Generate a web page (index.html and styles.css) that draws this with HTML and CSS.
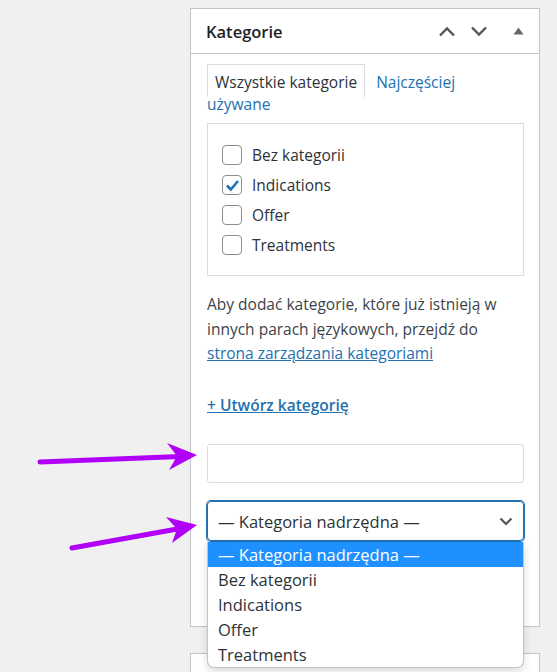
FILE: index.html
```html
<!DOCTYPE html>
<html lang="pl">
<head>
    <meta charset="UTF-8">
    <title>Kategorie</title>
    <link rel="stylesheet" href="styles.css">
</head>
<body>
<div class="screen">
    <div class="postbox">
        <div class="postbox-header">
            <h2 class="postbox-title">Kategorie</h2>
            <div class="handle-actions">
                <svg class="chev" width="18" height="11" viewBox="0 0 18 11"><path d="M2 9.5 L9 2.5 L16 9.5" fill="none" stroke="#50575e" stroke-width="2.4"/></svg>
                <svg class="chev" width="18" height="11" viewBox="0 0 18 11"><path d="M2 1.5 L9 8.5 L16 1.5" fill="none" stroke="#50575e" stroke-width="2.4"/></svg>
                <svg class="tri" width="11" height="8" viewBox="0 0 11 8"><path d="M5.5 0.5 L10.5 7.5 L0.5 7.5 Z" fill="#646970"/></svg>
            </div>
        </div>
        <div class="inside">
            <p class="tabs"><span class="tab-active">Wszystkie kategorie</span> <a class="tab-link" href="#">Najczęściej używane</a></p>

            <ul class="checklist">
                <li><span class="cb"></span>Bez kategorii</li>
                <li><span class="cb checked"><svg width="15" height="13" viewBox="0 0 15 13"><path d="M2 6.5 L5.8 10.5 L13 2" fill="none" stroke="#2271b1" stroke-width="2.6"/></svg></span>Indications</li>
                <li><span class="cb"></span>Offer</li>
                <li><span class="cb"></span>Treatments</li>
            </ul>

            <p class="note">Aby dodać kategorie, które już istnieją w innych parach językowych, przejdź do <a href="#">strona zarządzania kategoriami</a></p>

            <p class="add-toggle"><a href="#">+ Utwórz kategorię</a></p>

            <div class="new-cat">
                <div class="text-input"></div>
                <div class="select-wrap">
                    <div class="select">— Kategoria nadrzędna —
                        <svg width="14" height="9" viewBox="0 0 14 9"><path d="M1.5 1.5 L7 7 L12.5 1.5" fill="none" stroke="#50575e" stroke-width="2.2"/></svg>
                    </div>
                    <ul class="dropdown">
                        <li class="selected">— Kategoria nadrzędna —</li>
                        <li>Bez kategorii</li>
                        <li>Indications</li>
                        <li>Offer</li>
                        <li>Treatments</li>
                    </ul>
                </div>
            </div>
        </div>
    </div>
    <div class="postbox next-box"></div>

    <!-- arrows drawn over the screenshot -->
    <svg class="arrows" width="557" height="672" viewBox="0 0 557 672">
        <line x1="40" y1="462" x2="180" y2="456.5" stroke="#b000f8" stroke-width="5" stroke-linecap="round"/>
        <polygon points="197,455 167,443 177,456 169,470" fill="#b000f8"/>
        <line x1="72" y1="548" x2="180" y2="528.5" stroke="#b000f8" stroke-width="5" stroke-linecap="round"/>
        <polygon points="197,525 166,517 177,529 172,543" fill="#b000f8"/>
    </svg>
</div>
</body>
</html>
```

FILE: styles.css
```css
body{
    margin:0;
    background-color:#f0f0f1;
    font-family:"Open Sans", "Noto Sans", sans-serif;
    color:#3c434a;
}

.screen{
    position:relative;
    width:557px;
    height:672px;
    overflow:hidden;
    padding-top:8px;
    box-sizing:border-box;
}

.postbox{
    margin-left:190px;
    width:350px;
    box-sizing:border-box;
    background:#fff;
    border:1px solid #c3c4c7;
}

.postbox-header{
    height:44px;
    border-bottom:1px solid #c3c4c7;
    display:flex;
    align-items:center;
    justify-content:space-between;
    padding:0 15px;
}

.postbox-title{
    margin:0;
    font-size:16.5px;
    font-weight:600;
    color:#1d2327;
}

.handle-actions{
    display:flex;
    align-items:center;
}
.handle-actions .chev{
    margin-left:14px;
}
.handle-actions .tri{
    margin-left:25px;
}

.inside{
    padding:17px 15px 85px 16px;
}

.tabs{
    margin:0;
    max-width:290px;
    font-size:15.5px;
    line-height:22px;
}
.tab-active{
    border:1px solid #dcdcde;
    border-bottom:none;
    padding:6px 7px 4px 7px;
    color:#2c3338;
    margin-right:7px;
}
.tab-link{
    color:#2271b1;
    text-decoration:none;
}

.checklist{
    list-style:none;
    margin:8px 0 0;
    padding:16px 14px 15px;
    border:1px solid #dcdcde;
}
.checklist li{
    height:30px;
    display:flex;
    align-items:center;
    font-size:15.5px;
    color:#2c3338;
}
.cb{
    width:18px;
    height:18px;
    border:1px solid #8c8f94;
    border-radius:4px;
    margin-right:10px;
    display:flex;
    align-items:center;
    justify-content:center;
}

.note{
    margin:16px 0 0;
    font-size:15.5px;
    line-height:24.5px;
}
.note a, .add-toggle a{
    color:#2271b1;
}
.note a{
    white-space:nowrap;
}

.add-toggle{
    margin:27px 0 0;
    font-size:15.5px;
    line-height:24.5px;
    font-weight:600;
}

.new-cat{
    margin-top:27px;
}
.text-input{
    height:37px;
    border:1px solid #dcdcde;
    border-radius:3px;
}

.select-wrap{
    position:relative;
    margin-top:18px;
}
.select{
    height:38px;
    border:1px solid #2271b1;
    box-shadow:0 0 0 1px #2271b1;
    border-radius:4px;
    display:flex;
    align-items:center;
    justify-content:space-between;
    padding:0 10px 0 10px;
    font-size:16.5px;
    color:#2c3338;
}

.dropdown{
    position:absolute;
    top:41px;
    left:0;
    right:0;
    list-style:none;
    margin:0;
    padding:0;
    background:#fff;
    border:1px solid #c3c4c7;
    border-top:none;
    border-radius:0 0 7px 7px;
    box-shadow:0 3px 8px rgba(0,0,0,0.15);
    overflow:hidden;
}
.dropdown li{
    height:25px;
    line-height:25px;
    padding-left:10px;
    font-size:16.5px;
    color:#2c3338;
}
.dropdown .selected{
    background:#1e90ff;
    color:#fff;
}

.next-box{
    margin-top:26px;
    height:40px;
}

.arrows{
    position:absolute;
    top:0;
    left:0;
    pointer-events:none;
}
```
